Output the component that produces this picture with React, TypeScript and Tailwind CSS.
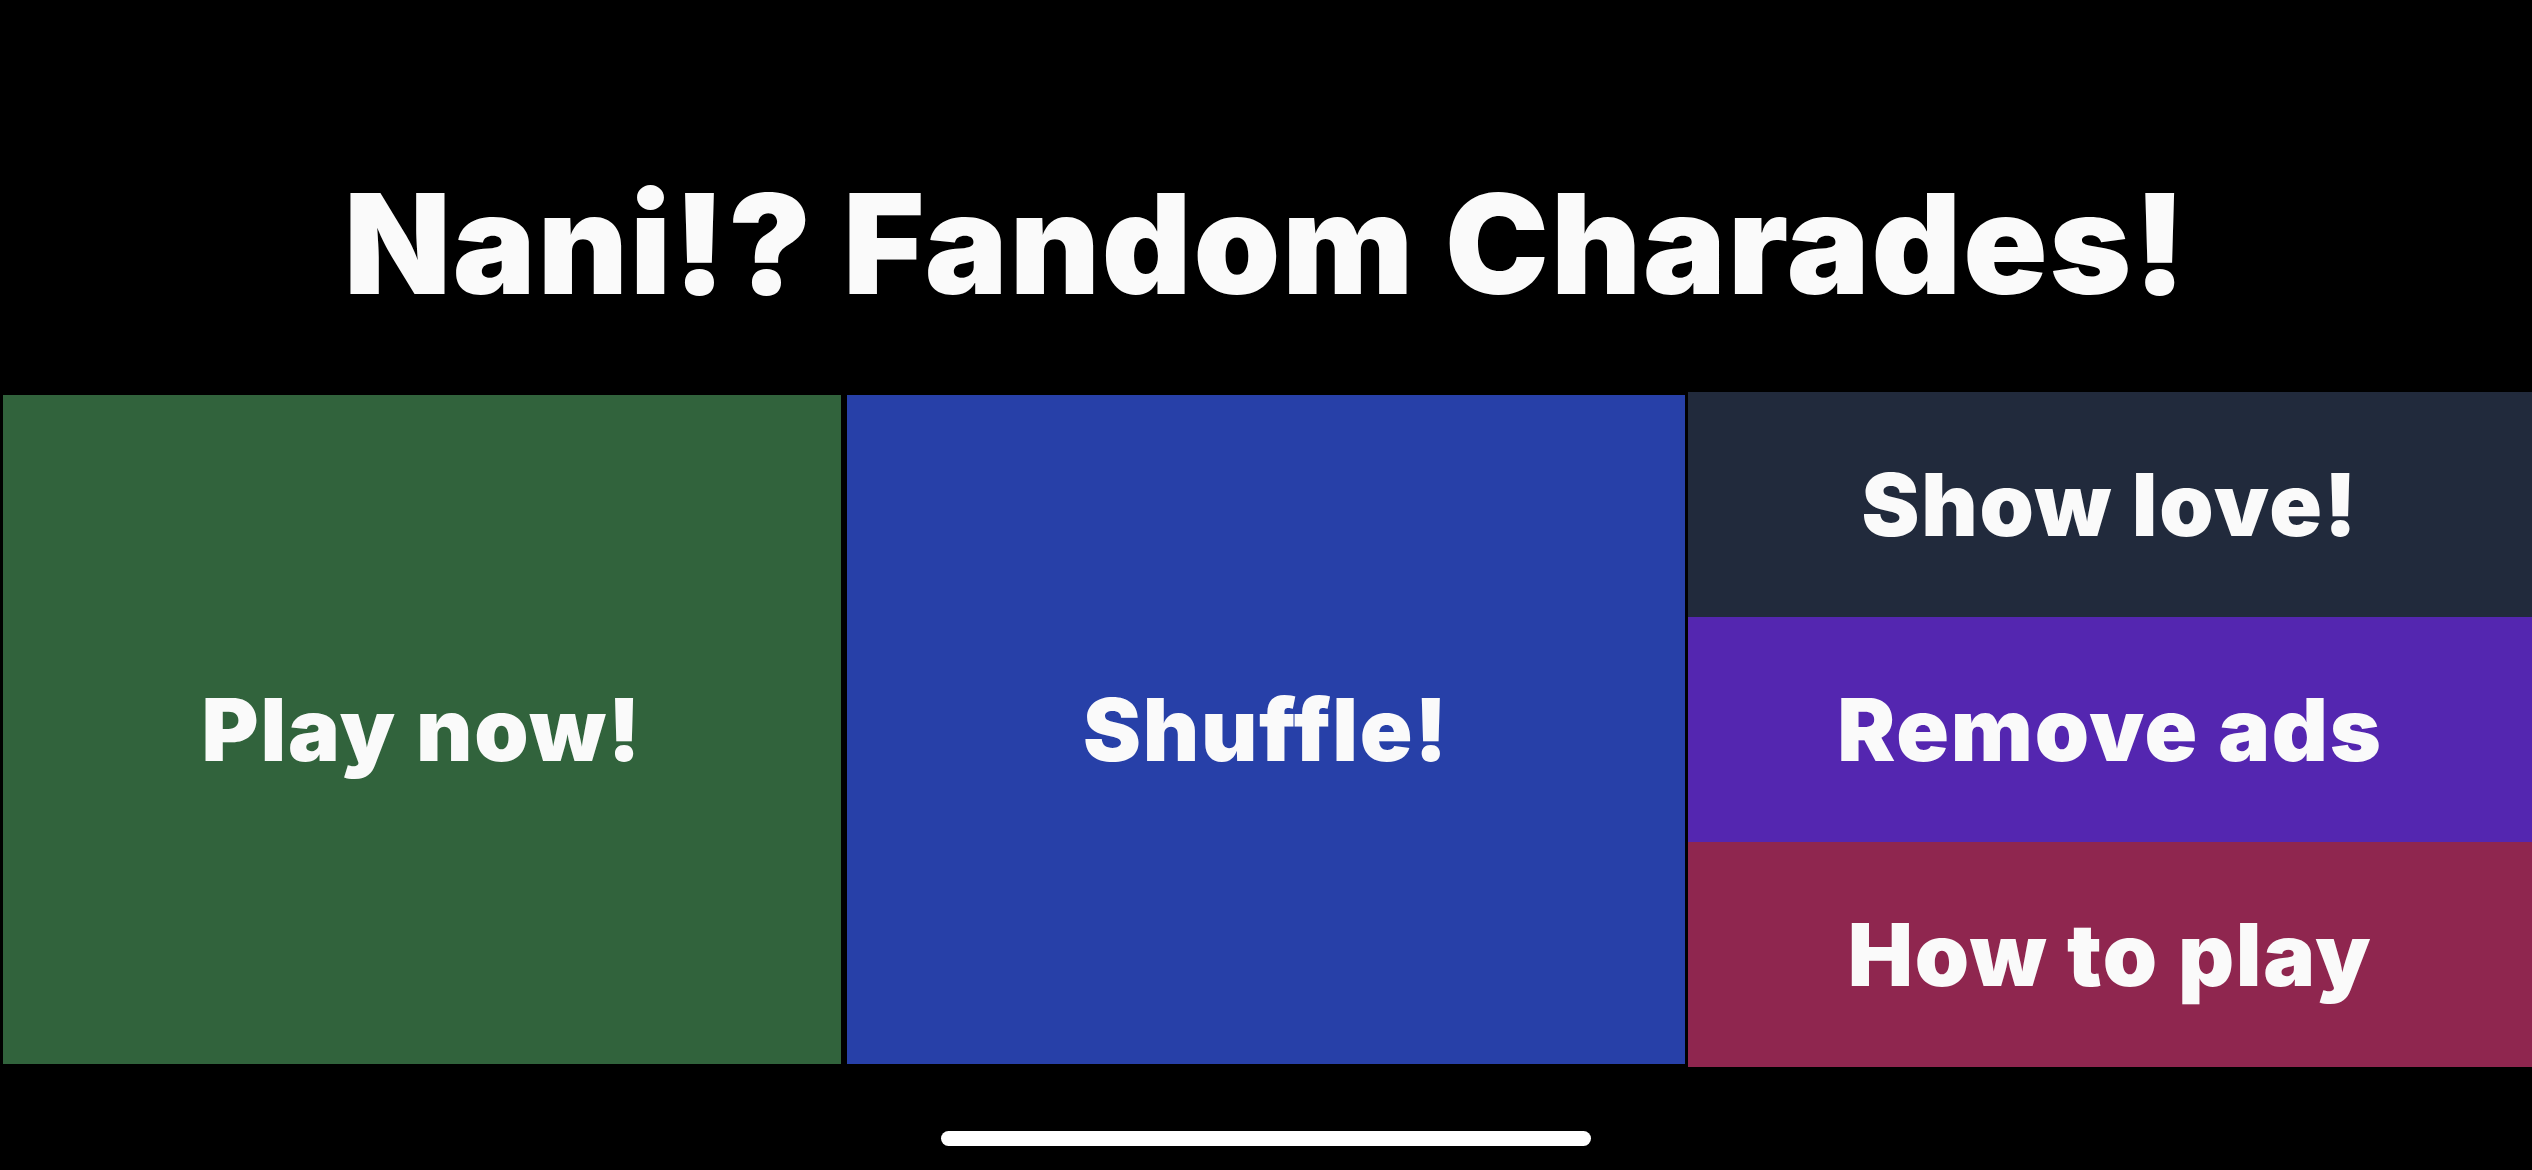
import React from "react";

const font = { fontFamily: "Inter, 'Noto Sans', sans-serif" };

const App = () => {
  return (
    <div className="w-[2532px] h-[1170px] bg-black flex flex-col text-[#fafafa]" style={font}>
      <div className="h-[392px] pt-[174px] flex justify-center">
        <h1 className="text-[139px] leading-none font-black tracking-[0.014em]">
          Nani!? Fandom Charades!
        </h1>
      </div>
      <div className="h-[675px] grid grid-cols-3">
        <button className="m-[3px] bg-[#31633c] flex items-center justify-center text-[87px] font-black leading-none tracking-[0.02em]">
          Play now!
        </button>
        <button className="m-[3px] bg-[#2740a8] flex items-center justify-center text-[87px] font-black leading-none tracking-[0.02em]">
          Shuffle!
        </button>
        <div className="flex flex-col">
          <button className="flex-1 bg-[#212a3c] flex items-center justify-center text-[87px] font-black leading-none tracking-[0.02em]">
            Show love!
          </button>
          <button className="flex-1 bg-[#5426b0] flex items-center justify-center text-[87px] font-black leading-none tracking-[0.02em]">
            Remove ads
          </button>
          <button className="flex-1 bg-[#8f264f] flex items-center justify-center text-[87px] font-black leading-none tracking-[0.02em]">
            How to play
          </button>
        </div>
      </div>
      <div className="flex-1 flex justify-center pt-[64px]">
        <div className="w-[650px] h-[15px] rounded-full bg-white" />
      </div>
    </div>
  );
};

export default App;
